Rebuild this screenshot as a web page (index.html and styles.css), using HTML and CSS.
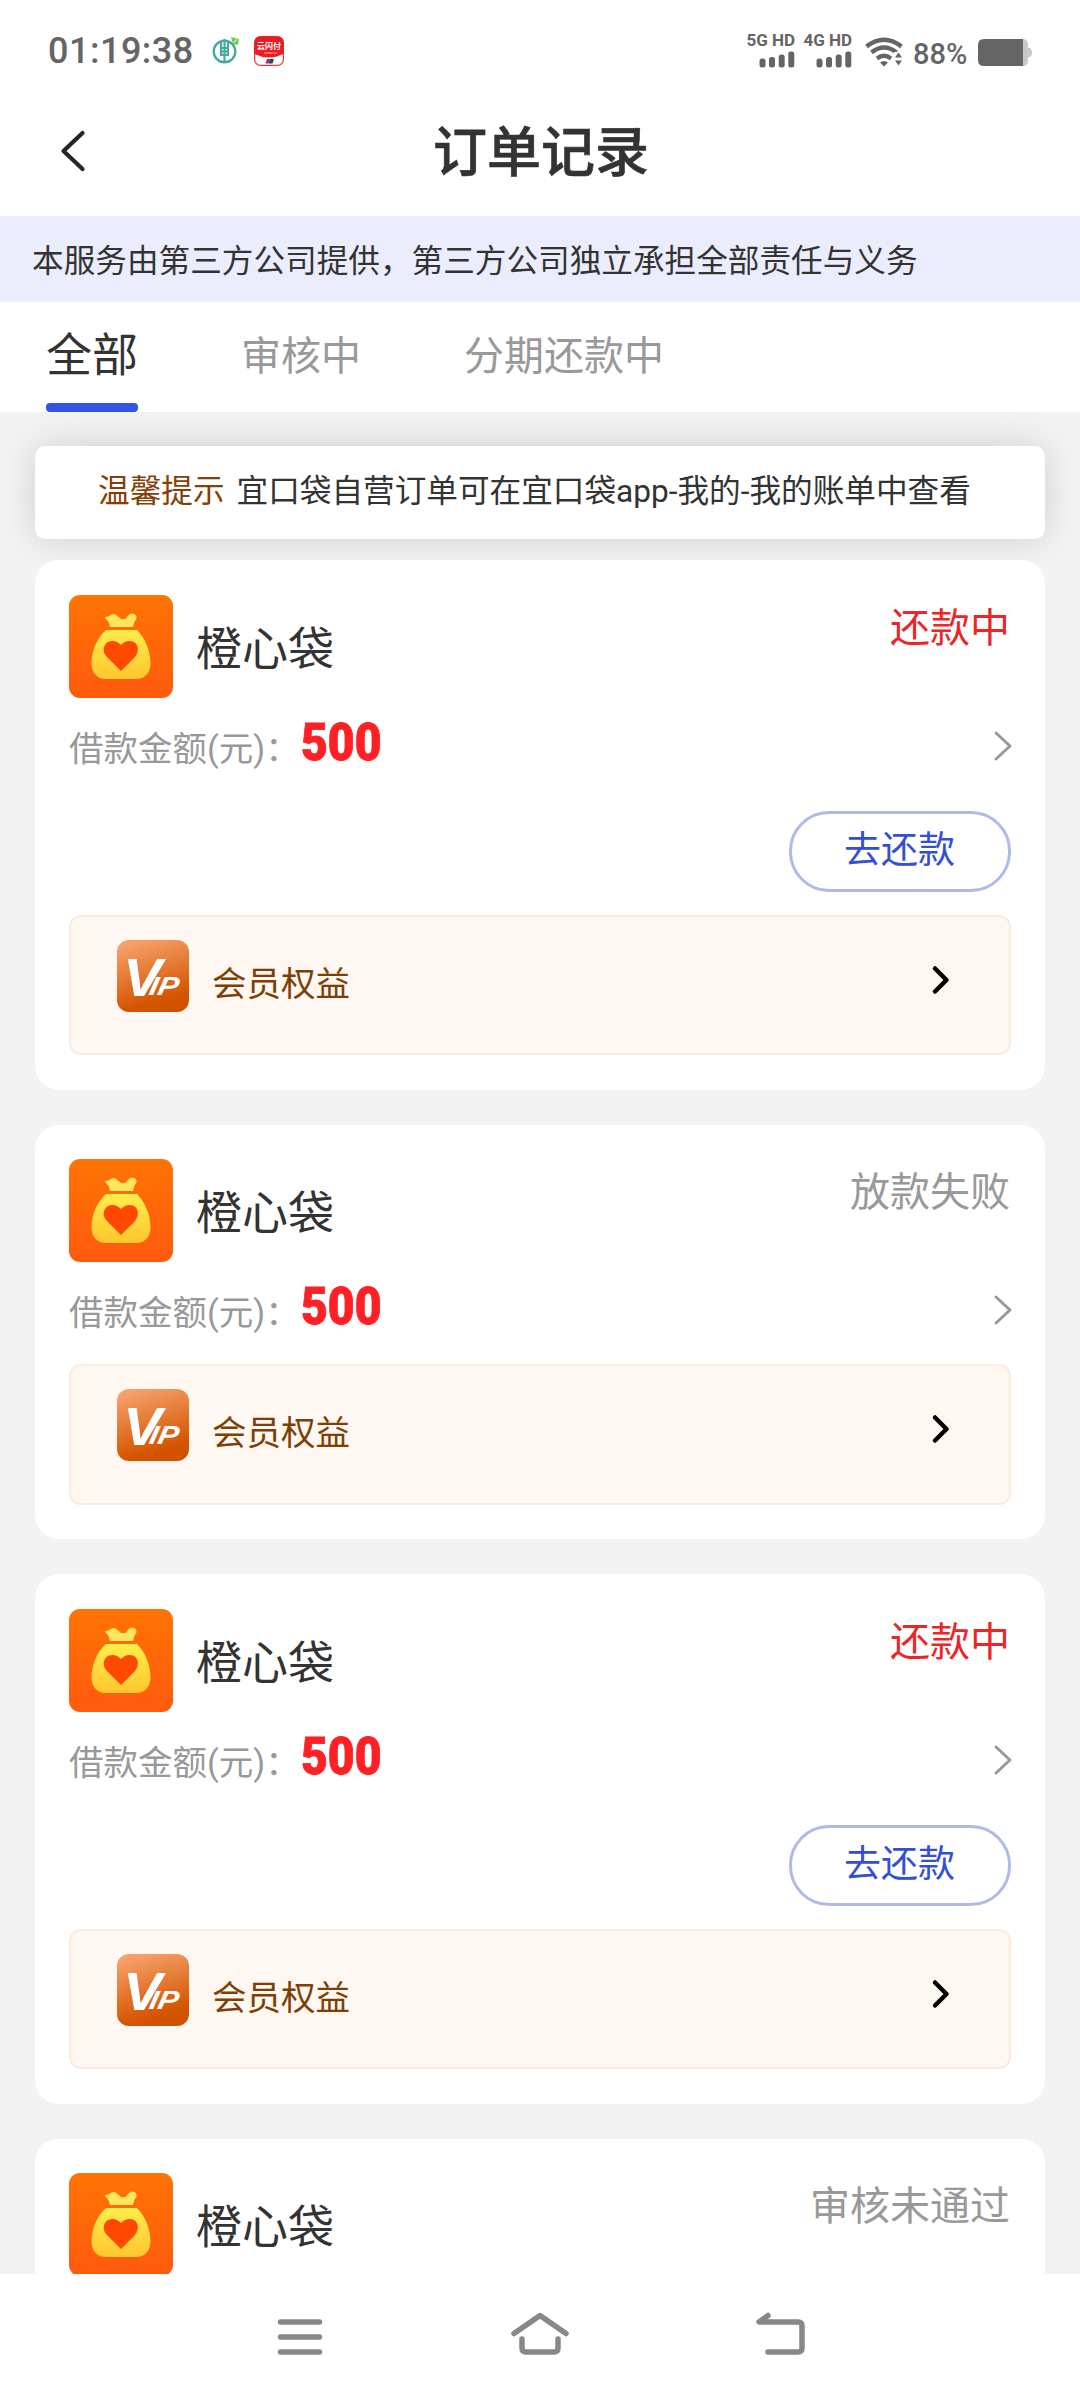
FILE: index.html
```html
<!DOCTYPE html>
<html lang="zh-CN">
<head>
<meta charset="utf-8">
<title>订单记录</title>
<link rel="stylesheet" href="styles.css">
</head>
<body>
<svg class="sprite" aria-hidden="true">
  <defs>
    <linearGradient id="logo-bg" x1="0" y1="0" x2="0" y2="1"><stop offset="0" stop-color="#ff7404"/><stop offset="1" stop-color="#ff5a0e"/></linearGradient>
    <linearGradient id="bag-fill" x1="0" y1="0" x2="0" y2="1"><stop offset="0" stop-color="#ffed4a"/><stop offset="1" stop-color="#ffc62f"/></linearGradient>
    <linearGradient id="vip-bg" x1="0.3" y1="0" x2="0.6" y2="1"><stop offset="0" stop-color="#f6a16b"/><stop offset="0.85" stop-color="#d45500"/><stop offset="1" stop-color="#cf5200"/></linearGradient>
  </defs>
  <symbol id="logo" viewBox="0 0 104 103">
    <rect width="104" height="103" rx="11" fill="url(#logo-bg)"/>
    <path d="M35.500 22.500Q40 21.500 42.500 19.500Q46 18 49 21.500Q53 26 57.500 23Q59 19 63.500 18.500Q68 18.800 67.500 23.500Q64.500 27 64 32H41Q40 26 35.500 22.500Z" fill="#ffe65c"/>
    <path d="M37 35H68C76 43 81.500 56 81.500 68C81.500 78 76 84 67 84H37C28 84 22.500 78 22.500 68C22.500 56 28 43 37 35Z" fill="url(#bag-fill)"/>
    <path d="M52 76L38 62C33 57 34 50 39 47C44 45 48 46 52 50C56 46 60 45 65 47C70 50 70 57 66 62Z" fill="#ff4800"/>
  </symbol>
  <symbol id="more" viewBox="0 0 20 32"><path d="M3 3L17 16L3 29" fill="none" stroke="#999" stroke-width="3" stroke-linecap="round" stroke-linejoin="round"/></symbol>
  <symbol id="go" viewBox="0 0 20 32"><path d="M4 4.500L15.500 16L4 27.500" fill="none" stroke="#000" stroke-width="4.500" stroke-linecap="round" stroke-linejoin="round"/></symbol>
  <symbol id="signal" viewBox="0 0 36 17">
    <rect x="0.500" y="7.500" width="6" height="9" rx="2.500"/><rect x="10" y="6" width="6" height="10.500" rx="2.500"/><rect x="19.700" y="3.500" width="6" height="13" rx="2.500"/><rect x="29.300" y="0.500" width="6" height="16" rx="2.500"/>
  </symbol>
</svg>

<div class="screen">
  <div class="status-bar">
    <span class="clock">01:19:38</span>
    <svg class="bank-icon" viewBox="0 0 28 28"><circle cx="12.500" cy="15.500" r="10.800" fill="none" stroke="#45a99b" stroke-width="2.300"/><path d="M12.500 3V26M9 6V12H16V6M9 12V19H16V12M9 15.500H16" fill="none" stroke="#45a99b" stroke-width="2.200"/><path d="M19 1L27 3L26 9L21 8Z" fill="#72c957"/><path d="M21.500 6.500L25 3.500" stroke="#fff" stroke-width="1"/></svg>
    <svg class="pay-icon" viewBox="0 0 30 30"><rect x="0.600" y="0.600" width="28.800" height="28.800" rx="6" fill="#fff" stroke="#e5343b" stroke-width="1.200"/><path d="M0.500 18V6.500Q0.500 0.500 6.500 0.500H23.500Q29.500 0.500 29.500 6.500V18Q15 25 0.500 18Z" fill="#ee1c22"/><text x="15" y="12.500" class="pay-name">云闪付</text><path d="M10 17H23" stroke="#ff9a9a" stroke-width="1.200"/><path d="M13 23H16L14.500 27.500H11.500Z" fill="#b52842"/><path d="M16 23H20L18.500 27.500H14.500Z" fill="#164b68"/></svg>
    <div class="indicators">
      <div class="network"><span>5G HD</span><svg class="signal"><use href="#signal"/></svg></div>
      <div class="network"><span>4G HD</span><svg class="signal"><use href="#signal"/></svg></div>
      <svg class="wifi" viewBox="0 0 38 30"><g fill="none" stroke="#656565" stroke-width="4.300"><path d="M1.500 9.500Q19 -4 36.500 9.500"/><path d="M6.500 15.500Q19 5.500 31.500 15.500"/><path d="M12 21.500Q19 16 26 21.500"/></g><path d="M15 25.500Q19 22.500 23 25.500L19 29.500Z" fill="#656565"/><path d="M29 30V15H38V30Z" fill="#fff"/><path d="M33.500 15.500L37 20.500H30ZM33.500 28.500L37 23.500H30Z" fill="#656565"/></svg>
      <span class="percent">88%</span>
      <svg class="battery" viewBox="0 0 54 27"><path d="M44 0H45Q50 0 50 6V8.500Q54 9 54 13.500Q54 18 50 18.500V21Q50 27 45 27H44Z" fill="#c8c8c8"/><path d="M45 0V27H6Q0 27 0 21V6Q0 0 6 0Z" fill="#656565"/></svg>
    </div>
  </div>

  <header class="title-bar">
    <svg class="back" viewBox="0 0 26 44"><path d="M22.500 4L3.500 22L22.500 40" fill="none" stroke="#262626" stroke-width="4.200" stroke-linecap="round" stroke-linejoin="round"/></svg>
    <h1>订单记录</h1>
  </header>

  <p class="notice">本服务由第三方公司提供，第三方公司独立承担全部责任与义务</p>

  <nav class="tabs">
    <a class="tab active">全部</a>
    <a class="tab">审核中</a>
    <a class="tab">分期还款中</a>
  </nav>

  <main class="list">
    <div class="tip"><span class="tip-label">温馨提示</span><span>宜口袋自营订单可在宜口袋app-我的-我的账单中查看</span></div>

    <section class="card">
      <div class="card-head"><svg class="logo"><use href="#logo"/></svg><h2>橙心袋</h2><span class="state due">还款中</span></div>
      <div class="amount"><span class="amount-label">借款金额(元)：</span><b>500</b><svg class="more"><use href="#more"/></svg></div>
      <div class="actions"><button class="repay">去还款</button></div>
      <div class="benefit"><svg class="vip" viewBox="0 0 72 72"><rect width="72" height="72" rx="12" fill="url(#vip-bg)"/><text class="vip-v" transform="translate(6 55.500) scale(1.080 1)">V</text><text class="vip-ip" transform="translate(31 55) skewX(-12) scale(1.180 1)">IP</text></svg><span>会员权益</span><svg class="go"><use href="#go"/></svg></div>
    </section>

    <section class="card">
      <div class="card-head"><svg class="logo"><use href="#logo"/></svg><h2>橙心袋</h2><span class="state">放款失败</span></div>
      <div class="amount"><span class="amount-label">借款金额(元)：</span><b>500</b><svg class="more"><use href="#more"/></svg></div>
      <div class="benefit"><svg class="vip" viewBox="0 0 72 72"><rect width="72" height="72" rx="12" fill="url(#vip-bg)"/><text class="vip-v" transform="translate(6 55.500) scale(1.080 1)">V</text><text class="vip-ip" transform="translate(31 55) skewX(-12) scale(1.180 1)">IP</text></svg><span>会员权益</span><svg class="go"><use href="#go"/></svg></div>
    </section>

    <section class="card">
      <div class="card-head"><svg class="logo"><use href="#logo"/></svg><h2>橙心袋</h2><span class="state due">还款中</span></div>
      <div class="amount"><span class="amount-label">借款金额(元)：</span><b>500</b><svg class="more"><use href="#more"/></svg></div>
      <div class="actions"><button class="repay">去还款</button></div>
      <div class="benefit"><svg class="vip" viewBox="0 0 72 72"><rect width="72" height="72" rx="12" fill="url(#vip-bg)"/><text class="vip-v" transform="translate(6 55.500) scale(1.080 1)">V</text><text class="vip-ip" transform="translate(31 55) skewX(-12) scale(1.180 1)">IP</text></svg><span>会员权益</span><svg class="go"><use href="#go"/></svg></div>
    </section>

    <section class="card">
      <div class="card-head"><svg class="logo"><use href="#logo"/></svg><h2>橙心袋</h2><span class="state">审核未通过</span></div>
    </section>
  </main>

  <footer class="system-nav">
    <svg viewBox="0 0 60 48"><path d="M10.500 10H49.500M10.500 25H49.500M10.500 40H49.500"/></svg>
    <svg viewBox="0 0 60 48"><path d="M4 21.500L30 3.500L56 21.500M12 27V36Q12 40 16 40H44Q48 40 48 36V27"/></svg>
    <svg viewBox="0 0 60 48"><path d="M18 3.500L9 10H48Q52 10 52 14V36Q52 40 48 40H18"/></svg>
  </footer>
</div>
</body>
</html>
```

FILE: styles.css
```css
* {
  box-sizing: border-box;
}

body {
  margin: 0;
  background: #fff;
  color: #333;
  font-family: Roboto, "Noto Sans CJK SC", sans-serif;
}

h1, h2, p {
  margin: 0;
  font-weight: 400;
}

.sprite {
  display: block;
  width: 0;
  height: 0;
}

.screen {
  display: flex;
  flex-direction: column;
  width: 1080px;
  height: 2400px;
  overflow: hidden;
}

/* Status bar */
.status-bar {
  display: flex;
  align-items: flex-start;
  height: 86px;
  padding: 34px 48px 0 48px;
  color: #656565;
}

.clock {
  width: 164px;
  font-size: 36px;
  font-weight: 500;
  line-height: 34px;
  letter-spacing: 0.5px;
}

.bank-icon {
  width: 28px;
  height: 28px;
  margin-top: 2px;
}

.pay-icon {
  width: 30px;
  height: 30px;
  margin: 2px 0 0 14px;
}

.pay-name {
  fill: #fff;
  font-size: 8px;
  font-weight: 700;
  text-anchor: middle;
}

.indicators {
  display: flex;
  margin-left: auto;
}

.network {
  display: flex;
  flex-direction: column;
  align-items: flex-end;
  width: 48px;
  margin-right: 9px;
  font-size: 17px;
  font-weight: 700;
  line-height: 13px;
  white-space: nowrap;
}

.signal {
  width: 36px;
  height: 17px;
  margin-top: 4px;
  fill: #656565;
}

.wifi {
  width: 38px;
  height: 30px;
  margin: 3px 10px 0 4px;
}

.percent {
  width: 65px;
  margin-top: 5px;
  font-size: 29px;
  font-weight: 500;
  line-height: 30px;
}

.battery {
  width: 54px;
  height: 27px;
  margin-top: 5px;
}

/* Page title */
.title-bar {
  display: grid;
  grid-template-columns: 100px 1fr 98px;
  align-items: center;
  height: 130px;
}

.back {
  width: 26px;
  height: 44px;
  margin-left: 60px;
}

.title-bar h1 {
  padding-top: 6px;
  font-size: 54px;
  font-weight: 500;
  line-height: 60px;
  text-align: center;
  -webkit-text-stroke: 0.6px #333;
}

.notice {
  height: 86px;
  padding-left: 32px;
  background: #ebedfd;
  font-size: 31.640px;
  line-height: 91px;
}

/* Tabs */
.tabs {
  display: flex;
  gap: 103px;
  height: 110px;
  padding-left: 46px;
}

.tab {
  color: #999;
  font-size: 40px;
  line-height: 110px;
}

.tab.active {
  display: flex;
  flex-direction: column;
  justify-content: space-between;
  color: #333;
  font-size: 46px;
  line-height: 101px;
  padding-top: 3px;
}

.tab.active::after {
  height: 9px;
  margin-top: -3px;
  border-radius: 4px;
  background: #3352e6;
  content: "";
}

/* Order list */
.list {
  display: flex;
  flex: 1;
  flex-direction: column;
  min-height: 0;
  padding: 34px 35px 0;
  overflow: hidden;
  background: #f3f3f3;
}

.tip {
  display: flex;
  flex: none;
  gap: 12px;
  height: 93px;
  margin-bottom: 21px;
  padding-left: 63px;
  border-radius: 10px;
  background: #fff;
  box-shadow: 0 0 36px rgba(0, 0, 0, 0.15);
  font-size: 31.640px;
  line-height: 92px;
}

.tip-label {
  color: #844006;
}

.card {
  flex: none;
  z-index: 1;
  margin-bottom: 35px;
  padding: 34.500px 34px;
  border-radius: 24px;
  background: #fff;
}

.card-head {
  display: flex;
  height: 103px;
}

.logo {
  width: 104px;
  height: 103px;
}

.card-head h2 {
  margin-left: 23px;
  font-size: 46px;
  line-height: 109px;
}

.state {
  margin: 0 1px 0 auto;
  color: #999;
  font-size: 40px;
  line-height: 67px;
}

.state.due {
  color: #ec2626;
}

.amount {
  display: flex;
  height: 101.800px;
}

.amount-label {
  width: 232px;
  color: #999;
  font-size: 34.500px;
  line-height: 102px;
  white-space: nowrap;
}

.amount b {
  color: #ff2025;
  font-size: 52px;
  font-weight: 900;
  line-height: 90px;
  transform: scaleX(0.89);
  transform-origin: left;
  -webkit-text-stroke: 0.9px #ff2025;
}

.more {
  width: 20px;
  height: 32px;
  margin: 32px -2px 0 auto;
}

.actions {
  display: flex;
  justify-content: flex-end;
  height: 115.500px;
  padding-top: 11.500px;
}

.repay {
  width: 222px;
  height: 81px;
  padding: 0 1px 0 0;
  border: 3px solid #b0b9e8;
  border-radius: 40px;
  background: #fff;
  color: #3350d4;
  font: inherit;
  font-size: 37px;
  line-height: 72px;
}

.benefit {
  display: flex;
  height: 140.500px;
  padding: 23px 58px 0 46px;
  border: 2px solid #fcebdf;
  border-radius: 12px;
  background: #fff7f1;
  color: #7d3f06;
  font-size: 34.500px;
}

.benefit span {
  margin-left: 23px;
  line-height: 88px;
}

.vip {
  width: 72px;
  height: 72px;
}

.vip-v,
.vip-ip {
  fill: #fff;
  font-family: "Liberation Sans", sans-serif;
  font-style: italic;
  font-weight: 700;
}

.vip-v {
  font-size: 54px;
}

.vip-ip {
  font-size: 26px;
}

.go {
  width: 20px;
  height: 32px;
  margin: 24px 0 0 auto;
}

/* System navigation */
.system-nav {
  display: flex;
  flex: none;
  justify-content: center;
  gap: 180px;
  height: 126px;
  padding-top: 38px;
}

.system-nav svg {
  width: 60px;
  height: 48px;
  fill: none;
  stroke: #888;
  stroke-width: 5.500px;
  stroke-linecap: round;
  stroke-linejoin: round;
}
```
